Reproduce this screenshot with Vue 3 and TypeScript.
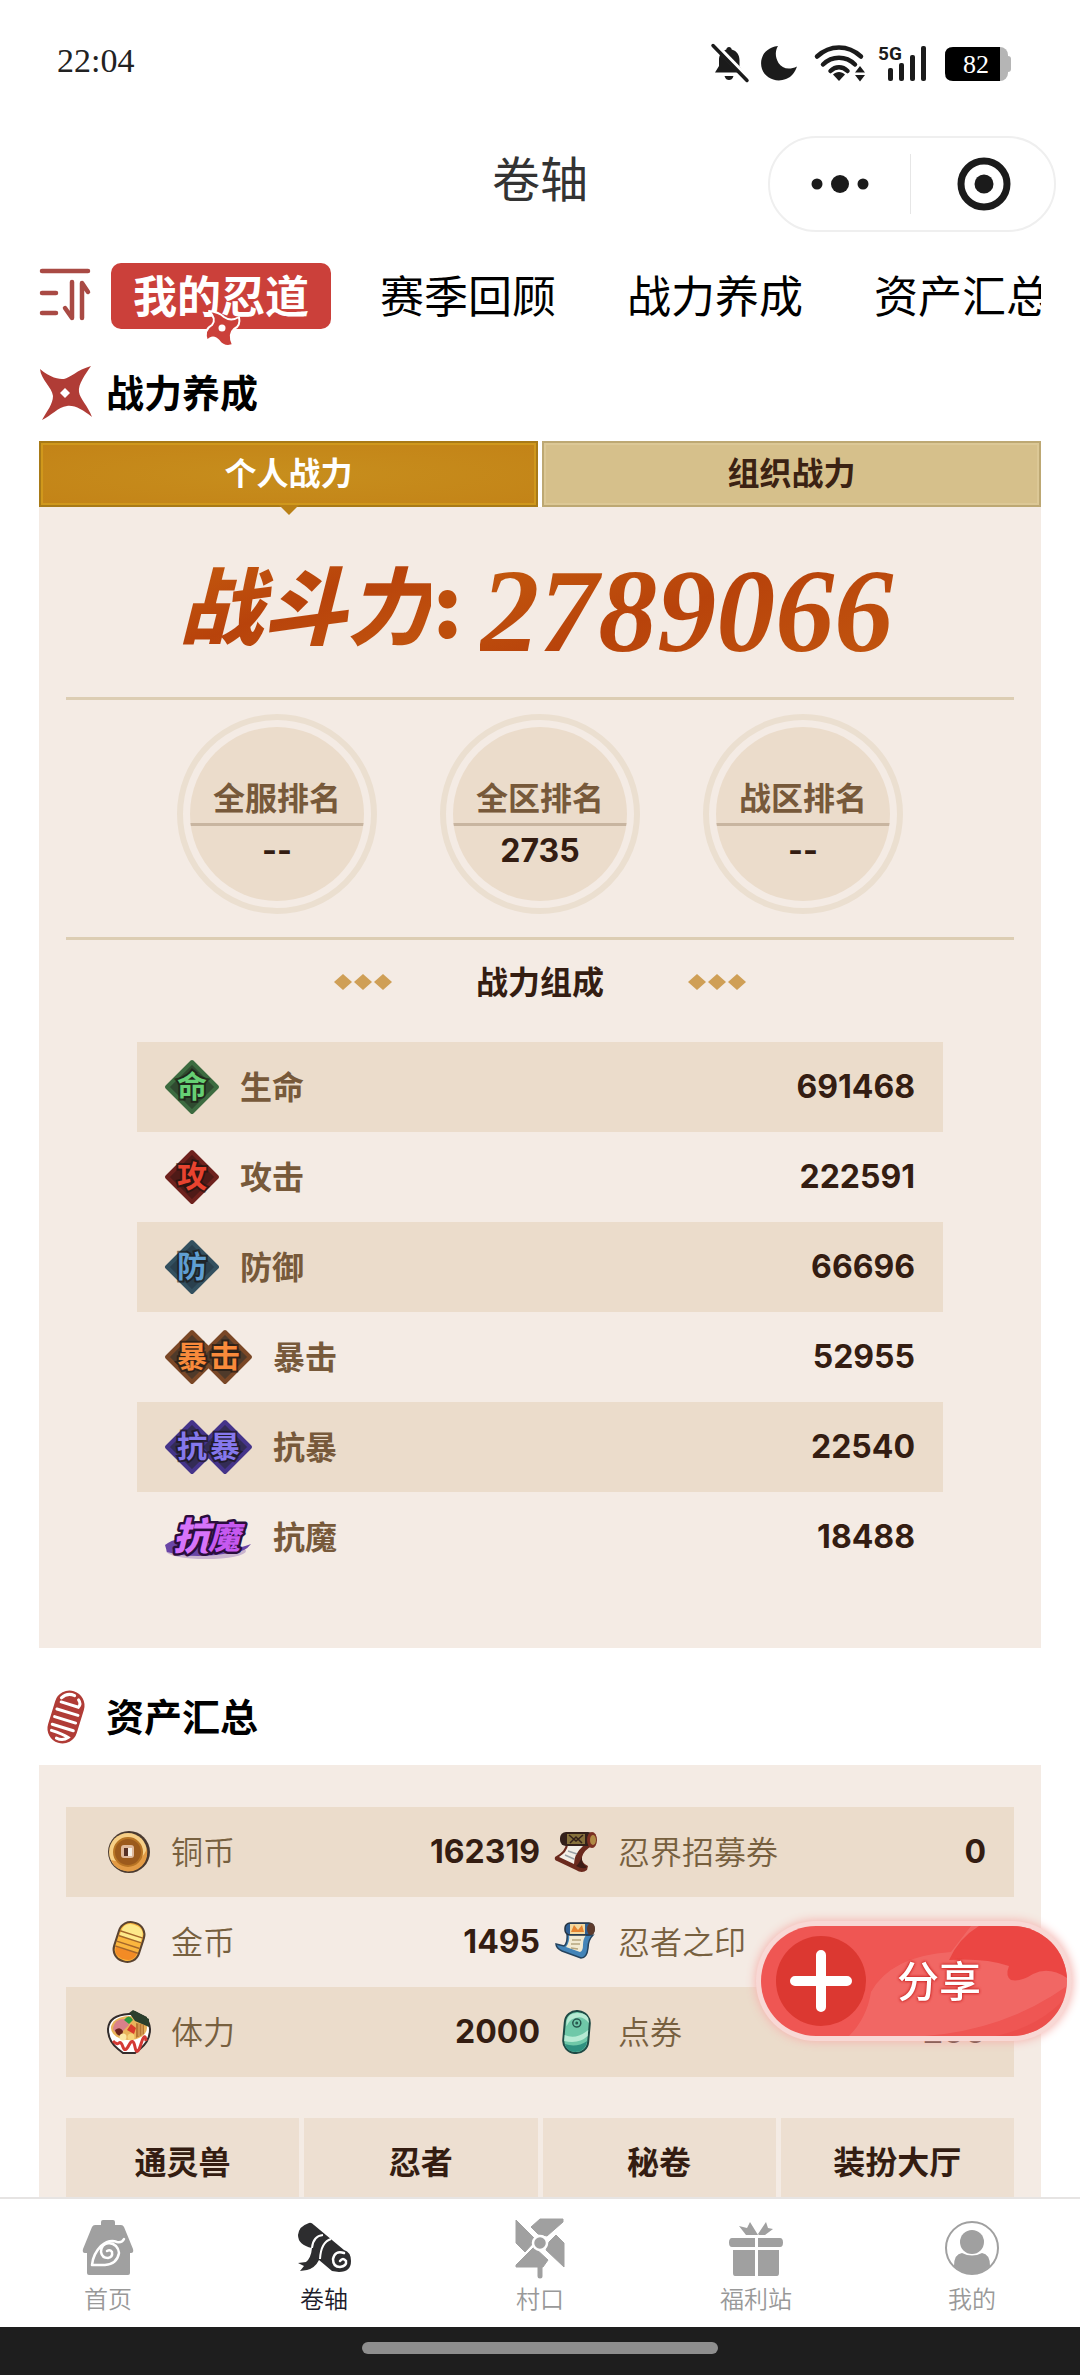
<script setup lang="ts">
import { ref } from 'vue'

interface Stat {
  label: string
  value: string
  glyphs: string[]
  fill: string
  edge: string
  ink: string
  brush?: boolean
}

interface Asset {
  label: string
  value: string
  icon: string
}

const sections: string[] = ['我的忍道', '赛季回顾', '战力养成', '资产汇总']
const activeSection = ref(0)

const powerTabs: string[] = ['个人战力', '组织战力']
const activePower = ref(0)

const ranks = [
  { label: '全服排名', value: '--' },
  { label: '全区排名', value: '2735' },
  { label: '战区排名', value: '--' },
]

const stats: Stat[] = [
  { label: '生命', value: '691468', glyphs: ['命'], fill: '#2f4a30', edge: '#3c6b40', ink: '#66cf74' },
  { label: '攻击', value: '222591', glyphs: ['攻'], fill: '#4f1a17', edge: '#6e211d', ink: '#e8432f' },
  { label: '防御', value: '66696', glyphs: ['防'], fill: '#2a404e', edge: '#33505f', ink: '#5f9ed2' },
  { label: '暴击', value: '52955', glyphs: ['暴', '击'], fill: '#4f3a2a', edge: '#7a4726', ink: '#f98a3b' },
  { label: '抗暴', value: '22540', glyphs: ['抗', '暴'], fill: '#332c55', edge: '#45348a', ink: '#8578ec' },
  { label: '抗魔', value: '18488', glyphs: ['抗', '魔'], fill: '#2a0e3c', edge: '#2a0e3c', ink: '#c659f0', brush: true },
]

const assets: Asset[][] = [
  [
    { label: '铜币', value: '162319', icon: 'coin' },
    { label: '忍界招募券', value: '0', icon: 'scroll-brown' },
  ],
  [
    { label: '金币', value: '1495', icon: 'gold' },
    { label: '忍者之印', value: '', icon: 'scroll-blue' },
  ],
  [
    { label: '体力', value: '2000', icon: 'ramen' },
    { label: '点券', value: '200', icon: 'jade' },
  ],
]

const categories: string[] = ['通灵兽', '忍者', '秘卷', '装扮大厅']

const tabs = [
  { label: '首页', icon: 'home' },
  { label: '卷轴', icon: 'scroll' },
  { label: '村口', icon: 'windmill' },
  { label: '福利站', icon: 'gift' },
  { label: '我的', icon: 'user' },
]
const activeTab = ref(1)
</script>

<template>
  <div class="app">
    <div class="status">
      <span class="clock">22:04</span>
      <svg class="status-icons" width="300" height="40" viewBox="0 0 300 40" aria-hidden="true">
        <g fill="#1b1b1b">
          <path d="M18 4c1.500 0 2.500 1 2.700 2.500C26 8 28.500 12 28.500 17v6l4 6.500H4l4-6.500v-6C8 12 10.500 8 15.300 6.500 15.500 5 16.500 4 18 4z" />
          <path d="M13.500 33h9c-1 3-2.500 4-4.500 4s-3.500-1-4.500-4z" />
          <path d="M4 2l34 35" stroke="#fff" stroke-width="6" />
          <path d="M2 2.500l34 35" stroke="#1b1b1b" stroke-width="3.500" stroke-linecap="round" />
          <path d="M67 3C52 5 48 17 51 26c3 9 14 14 24 10 6-2 9-7 11-12.500-8 4-15 2-18.500-3.500C64 14 64 8 67 3z" />
        </g>
        <g fill="none" stroke="#1b1b1b" stroke-width="4.500" stroke-linecap="round">
          <path d="M106 13.500c13-12 31-12 44 0" />
          <path d="M112 21.500c9-9 23-9 32 0" />
          <path d="M119.500 28c5-5 12-5 17 0" />
        </g>
        <path d="M128 38l-6-6.500c3-3.500 9-3.500 12 0z" fill="#1b1b1b" />
        <path d="M149 23l5 6.500h-10zM149 38.500l5-6.500h-10z" fill="#1b1b1b" />
        <text x="167" y="17" class="net">5G</text>
        <g fill="#1b1b1b">
          <rect x="177" y="25" width="5" height="13" rx="2" />
          <rect x="188" y="20" width="5" height="18" rx="2" />
          <rect x="199" y="12" width="5" height="26" rx="2" />
          <rect x="210" y="3" width="5" height="35" rx="2" />
        </g>
        <rect x="280" y="4" width="17" height="34" rx="8" fill="#b5b5b5" />
        <rect x="292" y="13" width="8" height="16" rx="3" fill="#b5b5b5" />
        <path d="M242 4h47v34h-47q-8 0-8-8V12q0-8 8-8z" fill="#000" />
        <text x="265" y="30" text-anchor="middle" class="charge">82</text>
      </svg>
    </div>

    <header class="navbar">
      <h1 class="title">卷轴</h1>
      <div class="capsule">
        <button class="capsule-btn" type="button" aria-label="更多">
          <svg width="60" height="60" viewBox="0 0 60 60"><g fill="#1b1b1b"><circle cx="7" cy="30" r="5.500" /><circle cx="30" cy="30" r="9" /><circle cx="53" cy="30" r="5.500" /></g></svg>
        </button>
        <button class="capsule-btn" type="button" aria-label="关闭">
          <svg width="60" height="60" viewBox="0 0 60 60"><circle cx="30" cy="30" r="23" fill="none" stroke="#1b1b1b" stroke-width="7" /><circle cx="30" cy="30" r="9.500" fill="#1b1b1b" /></svg>
        </button>
      </div>
    </header>

    <nav class="sections">
      <svg class="sort" width="54" height="54" viewBox="0 0 54 54" aria-hidden="true">
        <g fill="none" stroke="#a94a44" stroke-width="4.500" stroke-linecap="round" stroke-linejoin="round">
          <path d="M3 4h46M3 26h14M3 46h14M33 15v36l-7-10M43 51V16l6 9" />
        </g>
      </svg>
      <div class="section-list">
        <button
          v-for="(name, i) in sections"
          :key="name"
          type="button"
          class="section-btn"
          :class="{ active: i === activeSection }"
          @click="activeSection = i"
        >
          {{ name }}
          <svg v-if="i === activeSection" class="pin" width="38" height="40" viewBox="-1 0 38 40" aria-hidden="true">
            <path d="M5 2Q15 3 20 8 27 13 35 8 37 17 30 20 24 25 29 36 20 39 15 32 9 25 3 32-1 21 8 16 13 10 5 2z" fill="#cb403a" stroke="#fff" stroke-width="2" stroke-linejoin="round" />
            <circle cx="18" cy="19" r="3.500" fill="#fff" />
          </svg>
        </button>
      </div>
    </nav>

    <main class="content">
      <h2 class="heading">
        <svg width="54" height="54" viewBox="0 0 54 54" aria-hidden="true">
          <path d="M1 3c10 9 19 10 24 10C31 12 38 4 52 0c-6 9-13 18-12 26 1 7 9 14 13 25-9-7-17-12-25-11C19 41 12 50 3 54c5-9 11-16 11-24C13 21 2 14 1 3z" fill="#b03c36" />
          <path d="M26 22l5 5-5 5-5-5z" fill="#fff" />
        </svg>
        <span>战力养成</span>
      </h2>

      <section class="panel">
        <div class="power-tabs" role="tablist">
          <button
            v-for="(name, i) in powerTabs"
            :key="name"
            type="button"
            role="tab"
            class="power-tab"
            :class="{ active: i === activePower }"
            :aria-selected="i === activePower"
            @click="activePower = i"
          >
            {{ name }}
          </button>
        </div>

        <p class="power">
          <span class="power-label">战斗力</span>
          <span class="power-colon">:</span>
          <span class="power-value">2789066</span>
        </p>

        <dl class="ranks">
          <div v-for="rank in ranks" :key="rank.label" class="rank">
            <div class="rank-disc">
              <dt>{{ rank.label }}</dt>
              <dd>{{ rank.value }}</dd>
            </div>
          </div>
        </dl>

        <h3 class="subheading">
          <svg width="58" height="18" viewBox="0 0 58 18" aria-hidden="true"><path d="M9 1l9 8-9 8-9-8zM29 1l9 8-9 8-9-8zM49 1l9 8-9 8-9-8z" fill="#cf9f56" /></svg>
          <span>战力组成</span>
          <svg width="58" height="18" viewBox="0 0 58 18" aria-hidden="true"><path d="M9 1l9 8-9 8-9-8zM29 1l9 8-9 8-9-8zM49 1l9 8-9 8-9-8z" fill="#cf9f56" /></svg>
        </h3>

        <dl class="stats">
          <div v-for="stat in stats" :key="stat.label" class="stat">
            <dt>
              <svg
                :width="stat.glyphs.length === 1 ? 55 : 88"
                height="56"
                :viewBox="`1 0 ${stat.glyphs.length === 1 ? 55 : 88} 56`"
                aria-hidden="true"
              >
                <template v-if="stat.brush">
                  <ellipse cx="42" cy="42" rx="40" ry="8" fill="#7b4fa8" opacity="0.35" />
                  <path d="M1 36q10-8 20-4l44 6q10 2 22-3-6 8-16 8-40 8-68 0z" fill="#6a45a6" />
                  <text x="28" y="41" class="brush big">抗</text>
                  <text x="60" y="40" class="brush">魔</text>
                </template>
                <template v-else>
                  <path
                    v-for="(g, i) in stat.glyphs"
                    :key="'d' + g"
                    :d="`M${28 + i * 33} 3 L${53 + i * 33} 28 L${28 + i * 33} 53 L${3 + i * 33} 28 Z`"
                    :fill="stat.fill"
                    :stroke="stat.edge"
                    stroke-width="4"
                    stroke-linejoin="round"
                  />
                  <text
                    v-for="(g, i) in stat.glyphs"
                    :key="'t' + g"
                    :x="28 + i * 33"
                    y="38"
                    class="badge-text"
                    :fill="stat.ink"
                  >{{ g }}</text>
                </template>
              </svg>
              <span>{{ stat.label }}</span>
            </dt>
            <dd>{{ stat.value }}</dd>
          </div>
        </dl>
      </section>

      <h2 class="heading second">
        <svg width="54" height="54" viewBox="0 0 54 54" aria-hidden="true">
          <g transform="rotate(17 27 27)">
            <rect x="12" y="0" width="30" height="54" rx="15" fill="#b03c36" />
            <g fill="none" stroke="#fff" stroke-width="3" stroke-linecap="round">
              <path d="M17 10q4-7 12-6M18 14h18q2-4-2-7M16 22h22M16 30h22M16 38h22M17 44q12 0 18 2-4 5-11 4" />
            </g>
          </g>
        </svg>
        <span>资产汇总</span>
      </h2>

      <section class="panel assets-panel">
        <div class="assets">
          <dl v-for="(pair, r) in assets" :key="r" class="asset-row">
            <div v-for="item in pair" :key="item.label" class="asset">
              <dt>
                <svg width="44" height="44" viewBox="0 0 44 44" aria-hidden="true">
                  <g v-if="item.icon === 'coin'">
                    <circle cx="22" cy="22" r="21" fill="#4a3a30" />
                    <circle cx="21" cy="22" r="19" fill="#f7cf86" />
                    <path d="M4 30a19 19 0 0034 2q3-6 2-14Q34 38 4 30z" fill="#e39b45" />
                    <circle cx="21" cy="22" r="14" fill="#9c5a1c" />
                    <circle cx="21" cy="22" r="14" fill="none" stroke="#b87424" stroke-width="2" />
                    <rect x="14" y="15" width="13" height="13" rx="3" fill="#e0b99c" />
                    <path d="M17 18h4v8h-4z" fill="#573126" /><path d="M21 18h4v8h-4z" fill="#f6efe6" />
                  </g>
                  <g v-else-if="item.icon === 'gold'" transform="rotate(18 22 22)">
                    <rect x="9" y="2" width="26" height="40" rx="12" fill="#fbb63e" stroke="#5a4330" stroke-width="2" />
                    <path d="M11 15Q11 4 22 4t11 10v5H11z" fill="#fde98a" />
                    <path d="M11 30h22q0 10-11 10T11 30z" fill="#f38b25" />
                    <path d="M10 14h24M10 19h24M10 25h24M10 30h24" stroke="#a5672a" stroke-width="1.500" />
                  </g>
                  <g v-else-if="item.icon === 'ramen'">
                    <path d="M22 3l4-3 14 7v12l-12-4z" fill="#2b3f2c" />
                    <path d="M1 19Q2 5 22 4t21 15q0 12-10 20l-5 4H16l-5-4Q1 31 1 19z" fill="#fff" stroke="#332c2c" stroke-width="2" />
                    <ellipse cx="22" cy="18" rx="18" ry="12" fill="#e9b35a" />
                    <path d="M23 4l5-3 14 8v8l-14-6z" fill="#2b3f2c" />
                    <path d="M6 18q2-10 13-9l3 6-8 8q-8 0-8-5z" fill="#d9808a" />
                    <path d="M8 20q5-4 8 1l-1 5q-6 0-7-6z" fill="#6b241d" />
                    <path d="M20 20l4-6 5 4-2 6z" fill="#db3b2d" />
                    <path d="M17 10q5-7 9 0l-4 4z" fill="#2c9b3f" />
                    <path d="M29 13l8 2v9l-8 4z" fill="#b87735" />
                    <path d="M32 14v12M35 15v10" stroke="#e6b268" stroke-width="1" />
                    <circle cx="16" cy="27" r="3.500" fill="#fbe8a4" /><circle cx="24" cy="27" r="3.500" fill="#f7d47a" />
                    <path d="M6 31q4 4 6 2t4 4 6-2 6 2 6-3 5-3" fill="none" stroke="#d43a35" stroke-width="3" />
                  </g>
                  <g v-else-if="item.icon === 'jade'" transform="rotate(5 22 22)">
                    <rect x="10" y="1" width="25" height="42" rx="12" fill="#6fc8a8" stroke="#1f4a45" stroke-width="2" />
                    <path d="M11 26q12 4 23-7v6q-8 9-23 7zM12 17Q10 4 22 3t12 9q-4-5-10-5-9 1-12 10z" fill="#b6ead3" />
                    <path d="M12 35q12 3 22-5-1 11-11 12-9 0-11-7z" fill="#2f9180" />
                    <circle cx="22" cy="13" r="4" fill="none" stroke="#27574e" stroke-width="1.500" />
                    <circle cx="22" cy="13" r="1.500" fill="#27574e" />
                  </g>
                  <g v-else-if="item.icon === 'scroll-brown'">
                    <path d="M12 13Q12 21 1 27q-1 3 2 4l19 9q6 4 11 0l1-4q-7-3-6-9 2-7 10-11z" fill="#6b2a1e" />
                    <path d="M14 15q-1 7-9 12l15 7q0-10 9-18z" fill="#f4efe8" />
                    <path d="M14 21l9 3M11 25l9 4" stroke="#9aa0a6" stroke-width="1.500" />
                    <path d="M22 36q8 4 11 1-6-3-5-10-3 7-6 9z" fill="#3c1b15" />
                    <rect x="6" y="2" width="34" height="14" rx="6" fill="#33201a" />
                    <rect x="13" y="4" width="18" height="10" fill="#86713c" />
                    <path d="M15 5l7 6 7-6M16 13l6-6 6 6" fill="none" stroke="#33201a" stroke-width="1.500" />
                    <ellipse cx="38" cy="10" rx="5" ry="8" fill="#7a2f22" /><ellipse cx="39" cy="10" rx="3" ry="5" fill="#b08a45" />
                  </g>
                  <g v-else>
                    <path d="M13 13q1 10-3 13l-8-2q0 4 6 7l19 7q6 0 7-10 0-8 5-13z" fill="#4384b8" stroke="#24435e" stroke-width="1.500" />
                    <path d="M15 14q1 8-3 13l14 5q3-1 3-7 0-6 3-10z" fill="#f2ead2" />
                    <path d="M18 20h9M17 24h9M17 28l7 1" stroke="#b6a67f" stroke-width="1.500" />
                    <rect x="11" y="3" width="29" height="12" rx="5" fill="#2f5f92" stroke="#24323f" stroke-width="1.500" />
                    <path d="M16 4h15v10H16z" fill="#f3d9a0" /><path d="M17 12l3-7 4 5 4-5 2 7z" fill="#e58430" />
                    <ellipse cx="37" cy="9" rx="4" ry="6" fill="#5d3b2d" />
                  </g>
                </svg>
                <span>{{ item.label }}</span>
              </dt>
              <dd>{{ item.value }}</dd>
            </div>
          </dl>
        </div>

        <div class="categories">
          <button v-for="name in categories" :key="name" type="button" class="category">{{ name }}</button>
        </div>
      </section>
    </main>

    <button class="share" type="button">
      <svg class="flame" width="306" height="110" viewBox="0 0 306 110" preserveAspectRatio="none" aria-hidden="true">
        <path d="M190 26q-60 4-80 40-4 26-22 44h76q80-6 142-50V0H210z" fill="#f37772" opacity="0.55" />
        <path d="M188 34q10-22 30-34h88v52q-18-12-34-4-12 8-22 6-6-4-2-14-24-8-60-6z" fill="#e83b38" opacity="0.75" />
        <path d="M235 110q45-10 71-40v40z" fill="#ea4b48" opacity="0.6" />
      </svg>
      <span class="plus">
        <svg width="62" height="62" viewBox="0 0 62 62" aria-hidden="true"><path d="M31 5v52M5 31h52" stroke="#fff" stroke-width="10" stroke-linecap="round" /></svg>
      </span>
      <span class="share-text">分享</span>
    </button>

    <footer class="tabbar">
      <a
        v-for="(tab, i) in tabs"
        :key="tab.label"
        href="#"
        class="tab"
        :class="{ active: i === activeTab }"
        @click.prevent="activeTab = i"
      >
        <svg width="60" height="62" viewBox="0 0 60 62" aria-hidden="true">
          <g v-if="tab.icon === 'home'">
            <path d="M25 3h10q2 0 2 2v3h6q2 0 3 2l9 22q1 4-2 4h-1v20q0 2-2 2H11q-2 0-2-2V36H7q-3 0-2-4l9-22q1-2 3-2h6V5q0-2 2-2z" fill="#a0a0a0" />
            <path d="M46 22q-2 4-7 3-8-3-16 4-8 8-9 19h13q12-1 14-12-1-9-10-10-8 1-8 9 1 6 7 6 5-1 4-6-2-3-5-1" fill="none" stroke="#fff" stroke-width="2.500" stroke-linecap="round" stroke-linejoin="round" />
          </g>
          <g v-else-if="tab.icon === 'scroll'">
            <path d="M15 6q2-1 5 2l30 25q7 2 7 11 0 11-12 11l-7-1-13-11q-4 8-12 10l-7 1 4-5-6-3 8-1q5-4 6-14Q4 28 4 18 5 9 15 6z" fill="#2d2d2f" />
            <path d="M29 18q-10 1-11 13M37 22q-10 3-11 20" fill="none" stroke="#fff" stroke-width="2" />
            <path d="M50 36q-9-3-11 6 0 8 7 8 7-1 6-6-3-4-6 0" fill="none" stroke="#fff" stroke-width="2.500" stroke-linecap="round" />
          </g>
          <g v-else-if="tab.icon === 'windmill'" fill="#a0a0a0" stroke="#a0a0a0" stroke-width="1" stroke-linejoin="round">
            <path d="M6 3l20 20-11 12-9-9zM21 10l9-8h23v3L37 19l-9-2zM39 25l7-7 8 8v24L36 33zM6 48l18-18 14 13-5 7H6z" />
            <path d="M30 46v13" stroke-width="5" stroke-linecap="round" />
            <circle cx="30" cy="26" r="7" stroke="#fff" stroke-width="2.500" />
          </g>
          <g v-else-if="tab.icon === 'gift'" fill="#a0a0a0">
            <path d="M13 9l8 2 3-6 8 13H20zM32 17l8-12 2 6 5 1-8 6h-6z" />
            <path d="M6 21h23v9H6q-3 0-3-4.500t3-4.500zM32 21h22q3 0 3 4.500t-3 4.500H32zM7 33h22v26H9q-2 0-2-3zM32 33h21v23q0 3-2 3H32z" />
          </g>
          <g v-else>
            <circle cx="30" cy="31" r="26" fill="none" stroke="#a0a0a0" stroke-width="2" />
            <circle cx="30" cy="25" r="12" fill="#a0a0a0" />
            <path d="M12 49q0-12 8-13 10 5 20 0 8 1 8 13-8 8-18 8t-18-8z" fill="#a0a0a0" />
          </g>
        </svg>
        <span>{{ tab.label }}</span>
      </a>
    </footer>
    <div class="gesture"><span></span></div>
  </div>
</template>

<style>
body {
  margin: 0;
}
</style>

<style scoped>
.app {
  display: flex;
  flex-direction: column;
  height: 100vh;
  overflow: hidden;
  background: #fff;
  color: #000;
  font-family: "Noto Sans CJK SC", sans-serif;
}

button {
  margin: 0;
  padding: 0;
  border: 0;
  background: none;
  color: inherit;
  font: inherit;
}

h1,
h2,
h3,
p,
dl,
dd {
  margin: 0;
}

svg {
  display: block;
  flex: none;
  overflow: visible;
}

.status {
  display: flex;
  align-items: center;
  justify-content: space-between;
  height: 126px;
  padding: 0 69px 0 57px;
}

.clock {
  padding-bottom: 4px;
  color: #222;
  font: 34px "Liberation Serif", serif;
}

.net {
  fill: #1b1b1b;
  font: bold 19px Roboto, sans-serif;
}

.charge {
  fill: #fff;
  font: 26px "Liberation Serif", serif;
}

.navbar {
  display: grid;
  grid-template-columns: 1fr auto 1fr;
  align-items: center;
  height: 116px;
  padding: 0 24px;
}

.title {
  grid-column: 2;
  padding-bottom: 16px;
  color: #333;
  font-size: 48px;
  font-weight: 400;
  line-height: 60px;
}

.capsule {
  display: flex;
  align-items: center;
  justify-self: end;
  width: 288px;
  height: 96px;
  box-sizing: border-box;
  border: 2px solid #efefef;
  border-radius: 48px;
}

.capsule-btn {
  display: flex;
  flex: 1;
  justify-content: center;
}

.capsule-btn + .capsule-btn {
  padding-left: 4px;
  border-left: 1px solid #e6e6e6;
}

.sections {
  display: flex;
  flex: none;
  align-items: flex-start;
  padding: 21px 39px 0;
}

.sort {
  margin: 4px 18px 0 0;
}

.section-list {
  display: flex;
  flex: 1;
  gap: 27px;
  height: 88px;
  overflow: hidden;
}

.section-btn {
  position: relative;
  flex: none;
  height: 66px;
  padding: 0 22px 4px;
  border-radius: 10px;
  font-size: 44px;
  line-height: 60px;
}

.section-btn.active {
  background: #cb403a;
  color: #fff;
  font-weight: 700;
}

.pin {
  position: absolute;
  bottom: -20px;
  left: 50%;
  margin-left: -18px;
}

.content {
  flex: 1;
  min-height: 0;
  padding: 0 39px;
  overflow-y: auto;
  scrollbar-width: none;
}

.heading {
  display: flex;
  gap: 13px;
  align-items: center;
  height: 84px;
  padding-bottom: 6px;
  font-size: 38px;
  font-weight: 700;
}

.heading span {
  padding-bottom: 6px;
}

.heading.second {
  height: 96px;
  padding: 21px 0 0;
}

.panel {
  background: #f4ebe4;
}

.power-tabs {
  display: grid;
  grid-template-columns: 1fr 1fr;
  gap: 4px;
  background: #fff;
}

.power-tab {
  position: relative;
  height: 66px;
  box-sizing: border-box;
  padding-bottom: 6px;
  border: 2px solid #bda873;
  background: #d6c08b;
  box-shadow: inset 0 0 0 2px #dcc896;
  color: #3b2213;
  font-size: 32px;
  font-weight: 700;
  line-height: 56px;
}

.power-tab.active {
  border-color: #a87a17;
  background: radial-gradient(ellipse at center, #c78e1d, #c38317);
  box-shadow: inset 0 0 0 2px #d0981c;
  color: #fff;
}

.power-tab.active::after {
  position: absolute;
  top: 100%;
  left: 50%;
  margin-left: -10px;
  border: 10px solid transparent;
  border-top-color: #b98016;
  border-bottom: 0;
  content: "";
}

.power {
  display: flex;
  align-items: center;
  justify-content: center;
  height: 190px;
  margin: 0 27px;
  border-bottom: 3px solid #dccdb3;
  color: #bd4e0c;
  white-space: nowrap;
}

.power-label,
.power-value {
  background: linear-gradient(160deg, #c8620f, #b8430b 50%, #c45a10);
  background-clip: text;
  -webkit-background-clip: text;
  color: transparent;
}

.power-label {
  font-size: 84px;
  font-style: italic;
  font-weight: 900;
  line-height: 150px;
}

.power-colon {
  margin: 0 18px 0 2px;
  font-size: 84px;
  font-weight: 900;
  line-height: 150px;
}

.power-value {
  padding: 20px 8px 0 0;
  font: italic bold 118px/150px "Liberation Serif", serif;
}

.ranks {
  display: flex;
  gap: 63px;
  justify-content: center;
  margin: 0 27px;
  padding: 14px 0 23px;
  border-bottom: 3px solid #dccdb3;
}

.rank {
  padding: 7px;
  border: 6px solid #ebdfd0;
  border-radius: 50%;
}

.rank-disc {
  width: 174px;
  height: 174px;
  overflow: hidden;
  border-radius: 50%;
  background: #ebdccb;
  text-align: center;
}

.rank dt {
  padding-top: 42px;
  border-bottom: 3px solid #c8b5a0;
  color: #77593a;
  font-size: 32px;
  font-weight: 700;
  line-height: 54px;
}

.rank dd {
  color: #341d12;
  font: bold 32px/50px Inter, sans-serif;
}

.subheading {
  display: flex;
  gap: 84px;
  align-items: center;
  justify-content: center;
  height: 84px;
  margin-bottom: 18px;
  color: #341d12;
  font-size: 32px;
  font-weight: 700;
}

.subheading span,
.stat dt span,
.asset dt span {
  padding-bottom: 4px;
}

.stats {
  padding: 0 98px 66px;
}

.stat {
  display: flex;
  align-items: center;
  justify-content: space-between;
  height: 90px;
  padding: 0 28px;
}

.stat:nth-child(odd) {
  background: #ebdccb;
}

.stat dt {
  display: flex;
  gap: 20px;
  align-items: center;
  color: #77593a;
  font-size: 32px;
  font-weight: 700;
}

.stat dd {
  color: #341d12;
  font: bold 32px/40px Inter, sans-serif;
}

.badge-text {
  font-size: 30px;
  font-weight: 700;
  paint-order: stroke;
  stroke: #17120f;
  stroke-opacity: 0.6;
  stroke-width: 4px;
  text-anchor: middle;
}

.brush {
  fill: #c659f0;
  font-size: 32px;
  font-style: italic;
  font-weight: 900;
  paint-order: stroke;
  stroke: #2a0e3c;
  stroke-linejoin: round;
  stroke-width: 5px;
  text-anchor: middle;
}

.brush.big {
  fill: #d673fa;
  font-size: 38px;
}

.assets-panel {
  padding: 42px 27px 60px;
}

.asset-row {
  display: grid;
  grid-template-columns: 1fr 1fr;
  height: 90px;
}

.asset-row:nth-child(odd) {
  background: #ebdccb;
}

.asset {
  display: flex;
  align-items: center;
  justify-content: space-between;
  padding-left: 41px;
}

.asset + .asset {
  padding: 0 28px 0 14px;
}

.asset dt {
  display: flex;
  gap: 20px;
  align-items: center;
  color: #77603f;
  font-size: 32px;
  font-weight: 350;
}

.asset dd {
  color: #341d12;
  font: bold 32px/40px Inter, sans-serif;
}

.categories {
  display: grid;
  grid-template-columns: repeat(4, 1fr);
  gap: 5px;
  margin-top: 41px;
}

.category {
  height: 90px;
  padding-bottom: 6px;
  background: #eddfd1;
  color: #341d12;
  font-size: 32px;
  font-weight: 700;
}

.share {
  position: fixed;
  right: 13px;
  bottom: 339px;
  display: flex;
  align-items: center;
  width: 306px;
  height: 110px;
  padding-left: 15px;
  overflow: hidden;
  border-radius: 55px;
  background: #ef5653;
  box-shadow: 0 0 0 5px #f8d8d5, 0 0 10px 6px #f5b5b0;
}

.flame {
  position: absolute;
  inset: 0;
}

.plus {
  position: relative;
  display: flex;
  align-items: center;
  justify-content: center;
  width: 90px;
  height: 90px;
  border-radius: 50%;
  background: #dc3831;
}

.share-text {
  position: relative;
  margin-left: 31px;
  padding-bottom: 4px;
  color: #fff;
  font-size: 42px;
  font-weight: 500;
  line-height: 60px;
  text-shadow: 0 0 3px #c8201f, 0 0 3px #c8201f;
}

.tabbar {
  display: flex;
  flex: none;
  height: 130px;
  box-sizing: border-box;
  border-top: 2px solid #e6e4e3;
  background: #fff;
}

.tab {
  display: flex;
  flex: 1;
  flex-direction: column;
  align-items: center;
  padding-top: 18px;
  color: #999;
  font-size: 24px;
  font-weight: 350;
  line-height: 38px;
  text-decoration: none;
}

.tab.active {
  color: #1d1d2b;
}

.gesture {
  display: flex;
  flex: none;
  align-items: flex-start;
  justify-content: center;
  height: 33px;
  padding-top: 15px;
  background: #1e1e1e;
}

.gesture span {
  width: 33%;
  height: 12px;
  border-radius: 6px;
  background: #8e8e8e;
}
</style>
